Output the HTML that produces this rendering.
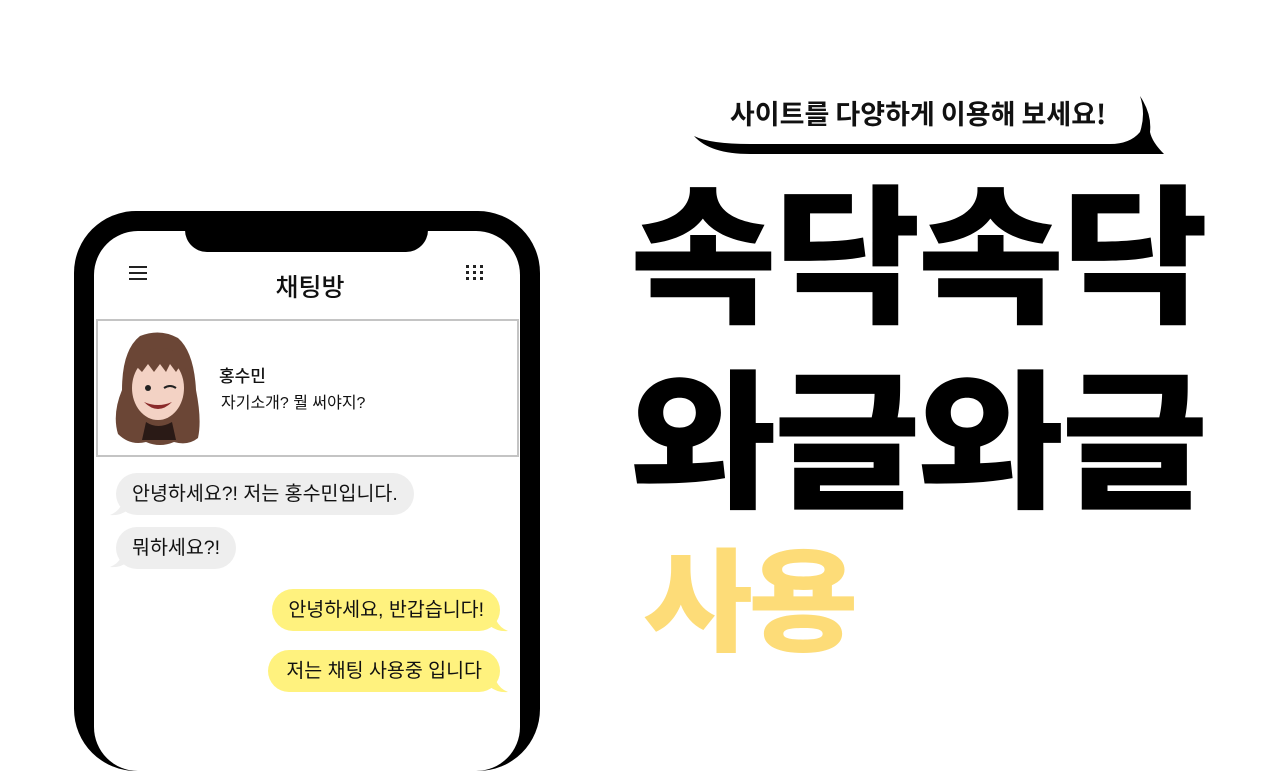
<!DOCTYPE html>
<html><head><meta charset="utf-8"><style>
*{margin:0;padding:0;box-sizing:border-box}
body{width:1280px;height:720px;background:#fff;position:relative;overflow:hidden;font-family:"Liberation Sans","Noto Sans CJK KR",sans-serif;color:#111}
.abs{position:absolute}
.phone{left:74px;top:211px;width:466px;height:560px;background:#000;border-radius:62px}
.screen{left:94px;top:231px;width:426px;height:540px;background:#fff;border-radius:44px}
.notch{left:185px;top:225px;width:243px;height:27px;background:#000;border-radius:0 0 22px 22px}
.big{font-family:"Noto Sans CJK KR",sans-serif;font-weight:900;font-size:150px;line-height:1;letter-spacing:-3px;white-space:nowrap;color:#000;transform:scaleX(1.065);transform-origin:0 0}
.bub{font-size:19.5px;height:42px;line-height:42px;border-radius:21px;padding:0 16px;white-space:nowrap}
.g{background:#eeeeee}
.y{background:#fff27e}
</style></head><body>
<svg class="abs" style="left:690px;top:92px" width="480" height="66">
<path d="M4 44 Q20 62 60 62 L440 62 Q460 62 474 62 Q462 50 460 40 Q462 22 450 4 Q456 22 450 40 Q440 52 420 52 L60 52 Q20 52 4 44Z" fill="#000"/>
</svg>
<div class="abs" style="left:688px;top:93px;width:460px;text-align:center;font-size:27px;font-weight:700;line-height:40px;font-family:'Noto Sans CJK KR',sans-serif">사이트를 다양하게 이용해 보세요!</div>
<div class="abs big" style="left:630px;top:172px">속닥속닥</div>
<div class="abs big" style="left:630px;top:357px">와글와글</div>
<div class="abs big" style="left:643px;top:538px;color:#fddc78;font-size:112px;letter-spacing:-4px">사용</div>

<div class="abs phone"></div>
<div class="abs screen"></div>
<div class="abs notch"></div>
<div class="abs" style="left:129px;top:266px;width:18px;height:2px;background:#222;box-shadow:0 6px 0 #222,0 12px 0 #222"></div>
<svg class="abs" style="left:466px;top:265px" width="20" height="16" fill="#222">
<rect x="0" y="0" width="3" height="3"/><rect x="7" y="0" width="3" height="3"/><rect x="14" y="0" width="3" height="3"/>
<rect x="0" y="6" width="3" height="3"/><rect x="7" y="6" width="3" height="3"/><rect x="14" y="6" width="3" height="3"/>
<rect x="0" y="12" width="3" height="3"/><rect x="7" y="12" width="3" height="3"/><rect x="14" y="12" width="3" height="3"/>
</svg>
<div class="abs" style="left:94px;top:268px;width:432px;text-align:center;font-size:25px;font-weight:500;font-family:'Noto Sans CJK KR',sans-serif;line-height:36px">채팅방</div>
<div class="abs" style="left:96px;top:319px;width:423px;height:138px;border:2px solid #c4c4c4"></div>
<svg class="abs" style="left:110px;top:330px" width="95" height="120">
<path d="M30 6 Q50 -2 68 8 Q84 22 86 60 Q92 90 88 108 Q78 116 64 112 Q50 118 36 112 Q20 116 8 104 Q2 84 12 60 Q12 20 30 6Z" fill="#6b4636"/>
<ellipse cx="48" cy="58" rx="26" ry="32" fill="#f3d2c4"/>
<path d="M22 40 Q30 18 50 18 Q72 18 76 40 L70 36 L66 42 L60 34 L56 42 L50 34 L44 42 L38 34 L32 42 L26 36Z" fill="#6b4636"/>
<circle cx="38" cy="58" r="3" fill="#222"/><path d="M54 58 Q60 54 66 58" stroke="#222" stroke-width="2" fill="none"/>
<path d="M34 72 Q48 86 62 72 Q48 78 34 72Z" fill="#8a2a2a"/>
<path d="M36 92 Q48 100 62 92 L66 110 L32 110Z" fill="#2a1a16"/>
</svg>
<div class="abs" style="left:219px;top:362px;font-size:17px;font-weight:500">홍수민</div>
<div class="abs" style="left:221px;top:389px;font-size:16px">자기소개? 뭘 써야지?</div>

<svg class="abs" style="left:108px;top:470px" width="410" height="230">
<path d="M2 45 Q10 42 14 34 L20 40 Q12 46 2 45Z" fill="#eeeeee"/>
<path d="M2 97 Q10 94 14 86 L20 92 Q12 98 2 97Z" fill="#eeeeee"/>
<path d="M400 161 Q392 158 388 150 L382 156 Q390 162 400 161Z" fill="#fff27e"/>
<path d="M400 222 Q392 219 388 211 L382 217 Q390 223 400 222Z" fill="#fff27e"/>
</svg>
<div class="abs bub g" style="left:116px;top:473px">안녕하세요?! 저는 홍수민입니다.</div>
<div class="abs bub g" style="left:116px;top:527px">뭐하세요?!</div>
<div class="abs bub y" style="right:780px;top:589px">안녕하세요, 반갑습니다!</div>
<div class="abs bub y" style="right:780px;top:650px;padding:0 18px">저는 채팅 사용중 입니다</div>
</body></html>
